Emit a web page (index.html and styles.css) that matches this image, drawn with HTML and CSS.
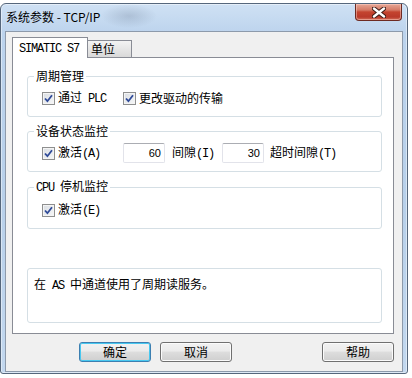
FILE: index.html
```html
<!DOCTYPE html>
<html lang="zh-CN">
<head>
<meta charset="utf-8">
<title>系统参数 - TCP/IP</title>
<link rel="stylesheet" href="styles.css">
</head>
<body>
<div class="window">
    <div class="titlebar">
        <span class="caption">系统参数 - TCP/IP</span>
        <span class="close">
            <svg width="14" height="11" viewBox="0 0 14 11">
                <path d="M2 1.5 L12 9.5 M12 1.5 L2 9.5" stroke="#3b1a14" stroke-width="4.4" stroke-linecap="round"/>
                <path d="M2 1.5 L12 9.5 M12 1.5 L2 9.5" stroke="#ffffff" stroke-width="2.4" stroke-linecap="round"/>
            </svg>
        </span>
    </div>
    <div class="client">
        <div class="tabs">
            <div class="tab active"><span class="mono">SIMATIC S7</span></div>
            <div class="tab">单位</div>
        </div>
        <div class="page">
            <fieldset class="group">
                <legend>周期管理</legend>
                <div class="row">
                    <label class="check col1"><span class="box"><svg width="9" height="9" viewBox="0 0 9 9"><path d="M1 4.5 L3.4 7.2 L8 1.2" fill="none" stroke="#2f4a98" stroke-width="1.8"/></svg></span><span>通过<span class="mono"> PLC</span></span></label>
                    <label class="check"><span class="box"><svg width="9" height="9" viewBox="0 0 9 9"><path d="M1 4.5 L3.4 7.2 L8 1.2" fill="none" stroke="#2f4a98" stroke-width="1.8"/></svg></span><span>更改驱动的传输</span></label>
                </div>
            </fieldset>
            <fieldset class="group">
                <legend>设备状态监控</legend>
                <div class="row">
                    <label class="check col1"><span class="box"><svg width="9" height="9" viewBox="0 0 9 9"><path d="M1 4.5 L3.4 7.2 L8 1.2" fill="none" stroke="#2f4a98" stroke-width="1.8"/></svg></span><span>激活<span class="mono">(A)</span></span></label>
                    <span class="field">60</span>
                    <span class="unit">间隙<span class="mono">(I)</span></span>
                    <span class="field">30</span>
                    <span class="unit last">超时间隙<span class="mono">(T)</span></span>
                </div>
            </fieldset>
            <fieldset class="group">
                <legend><span class="mono">CPU </span>停机监控</legend>
                <div class="row">
                    <label class="check col1"><span class="box"><svg width="9" height="9" viewBox="0 0 9 9"><path d="M1 4.5 L3.4 7.2 L8 1.2" fill="none" stroke="#2f4a98" stroke-width="1.8"/></svg></span><span>激活<span class="mono">(E)</span></span></label>
                </div>
            </fieldset>
            <div class="info">在<span class="mono"> AS </span>中通道使用了周期读服务。</div>
        </div>
        <div class="buttons">
            <button class="btn default">确定</button>
            <button class="btn">取消</button>
            <button class="btn help">帮助</button>
        </div>
    </div>
</div>
</body>
</html>
```

FILE: styles.css
```css
html, body
{
    margin: 0;
    padding: 0;
}

body
{
    width: 412px;
    height: 378px;
    overflow: hidden;
    background-color: #ffffff;
    font-family: "Noto Sans CJK SC", "Noto Sans", sans-serif;
    font-size: 12px;
    color: #000000;
}

.mono
{
    font-family: "Liberation Mono", "DejaVu Sans Mono", monospace;
    font-size: 12px;
    letter-spacing: -1.2px;
    white-space: pre;
}

.window
{
    box-sizing: border-box;
    width: 408px;
    height: 371px;
    margin-top: 3px;
    padding: 0 4px 1px 4px;
    border: 1px solid #56677c;
    border-radius: 6px 6px 3px 3px;
    background: linear-gradient(to bottom, #cfe1f4 0px, #bcd3ed 30px, #b8d0ea 200px, #c3d8ef 100%);
    box-shadow: inset 0 0 0 1px rgba(255, 255, 255, 0.45);
}

.titlebar
{
    display: flex;
    justify-content: space-between;
    align-items: flex-start;
    height: 27px;
    background: radial-gradient(ellipse 28px 12px at 124px 12px, rgba(80, 95, 120, 0.22), rgba(80, 95, 120, 0));
}

.caption
{
    margin: 4px 0 0 1px;
    line-height: 18px;
    color: #000000;
}

.close
{
    display: flex;
    align-items: center;
    justify-content: center;
    box-sizing: border-box;
    width: 47px;
    height: 17px;
    margin-right: 1px;
    border: 1px solid #6d2a22;
    border-top: none;
    border-radius: 0 0 4px 4px;
    background: linear-gradient(to bottom, #e7a796 0px, #d57a66 6px, #c4442f 8px, #b9392a 13px, #d3705a 100%);
    box-shadow: inset 0 0 0 1px rgba(255, 220, 210, 0.45);
}

.client
{
    box-sizing: border-box;
    height: 341px;
    border: 1px solid #8d9aab;
    background-color: #f0f0f0;
    padding-top: 5px;
}

.tabs
{
    display: flex;
    align-items: flex-end;
    height: 20px;
    margin-left: 6px;
}

.tab
{
    box-sizing: border-box;
    height: 17px;
    padding-left: 3px;
    width: 44px;
    line-height: 15px;
    border: 1px solid #898c95;
    border-left: none;
    border-bottom: none;
    background: linear-gradient(to bottom, #f3f3f3, #e6e6e6 50%, #d9d9d9);
}

.tab.active
{
    position: relative;
    z-index: 1;
    width: 76px;
    height: 21px;
    margin-bottom: -1px;
    padding-left: 6px;
    line-height: 18px;
    border-left: 1px solid #898c95;
    background: #ffffff;
}

.page
{
    box-sizing: border-box;
    height: 277px;
    margin: 0 8px 0 6px;
    padding: 10px 11px 0 14px;
    border: 1px solid #898c95;
    background-color: #ffffff;
}

.group
{
    margin: 0 0 6px 0;
    padding: 4px 0 8px 0;
    border: 1px solid #d5dfe5;
    border-radius: 3px;
    min-inline-size: 0;
}

.group legend
{
    margin-left: 6px;
    padding: 0 2px;
    line-height: 16px;
}

.row
{
    display: flex;
    align-items: center;
    height: 20px;
    padding-left: 14px;
    line-height: 16px;
}

.check
{
    display: flex;
    align-items: center;
    white-space: nowrap;
}

.check.col1
{
    width: 81px;
}

.box
{
    display: flex;
    align-items: center;
    justify-content: center;
    box-sizing: border-box;
    width: 13px;
    height: 13px;
    margin-right: 3px;
    border: 1px solid #8e8f8f;
    background: linear-gradient(135deg, #d9dde2, #f7f8f9);
    box-shadow: inset 0 0 0 1px #f4f4f4;
}

.field
{
    box-sizing: border-box;
    width: 42px;
    height: 20px;
    padding-right: 3px;
    border: 1px solid #e2e3ea;
    border-top-color: #abadb3;
    border-radius: 2px;
    text-align: right;
    line-height: 18px;
    font-family: "Liberation Sans", Arial, sans-serif;
    font-size: 11px;
}

.unit
{
    width: 50px;
    margin-left: 7px;
    white-space: nowrap;
}

.unit.last
{
    margin-left: 6px;
}

.info
{
    box-sizing: border-box;
    height: 55px;
    margin-top: 39px;
    padding: 7px 0 0 6px;
    border: 1px solid #d5dfe5;
    border-radius: 3px;
    line-height: 16px;
}

.buttons
{
    display: flex;
    margin: 8px 8px 0 73px;
}

.btn
{
    box-sizing: border-box;
    width: 72px;
    height: 20px;
    margin-right: 9px;
    padding: 0;
    border: 1px solid #707070;
    border-radius: 3px;
    background: linear-gradient(to bottom, #f2f2f2, #ebebeb 45%, #dddddd 50%, #cfcfcf);
    box-shadow: inset 0 0 0 1px #fbfbfb;
    font-family: "Noto Sans CJK SC", sans-serif;
    font-size: 12px;
    line-height: 16px;
    color: #000000;
}

.btn.default
{
    border-color: #3c7fb1;
    box-shadow: inset 0 0 0 1px #48c8f0;
}

.btn.help
{
    margin-left: auto;
    margin-right: 0;
}
```
